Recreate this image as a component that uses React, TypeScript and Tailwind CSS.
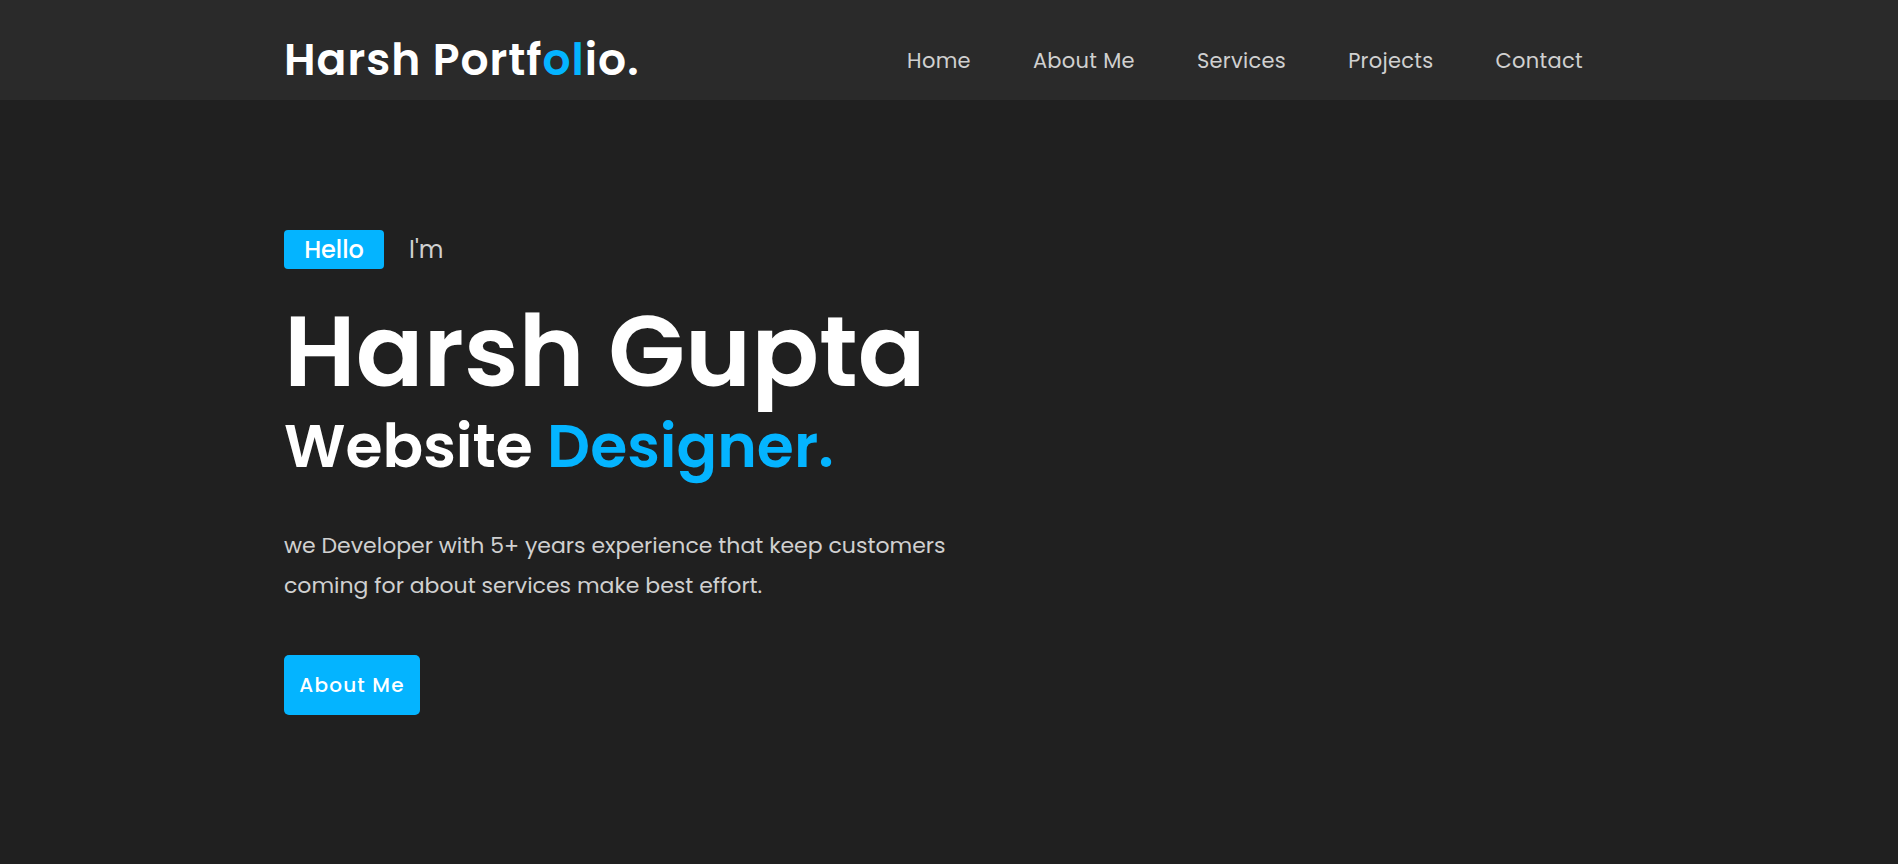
import React from 'react';

const links = ['Home', 'About Me', 'Services', 'Projects', 'Contact'];

export default function App() {
  return (
    <div className="min-h-screen bg-[#202020] font-['Poppins','Inter',sans-serif]">
      <header className="h-[100px] bg-[#2a2a2a] pt-[20px]">
        <div className="mx-auto flex h-full w-[1330px] items-center justify-between">
          <a href="#" className="text-[44px] font-semibold leading-none tracking-[1px] text-white">
            Harsh Portf<span className="text-[#04b4ff]">ol</span>io.
          </a>
          <nav className="mr-[31px] flex items-center gap-[62px]">
            {links.map((l) => (
              <a key={l} href="#" className="text-[21px] leading-none tracking-[0.3px] text-[#d0d0d0]">
                {l}
              </a>
            ))}
          </nav>
        </div>
      </header>

      <section className="mx-auto w-[1330px] pt-[130px]">
        <div className="flex items-center">
          <span className="flex h-[39px] w-[100px] items-center justify-center rounded-[4px] bg-[#04b4ff] text-[24px] font-medium leading-none text-white">
            Hello
          </span>
          <span className="ml-[25px] text-[24px] leading-none text-[#d0d0d0]">I'm</span>
        </div>
        <h1 className="mt-[32px] text-[100px] font-semibold leading-none text-white">Harsh Gupta</h1>
        <h2 className="mt-[15px] text-[60px] font-semibold leading-none text-white">
          Website <span className="text-[#04b4ff]">Designer.</span>
        </h2>
        <p className="mt-[50px] max-w-[680px] text-[22px] leading-[40px] text-[#d0d0d0]">
          we Developer with 5+ years experience that keep customers coming for about services make best effort.
        </p>
        <button className="mt-[49px] h-[60px] w-[136px] rounded-[5px] bg-[#04b4ff] text-[20px] font-medium tracking-[1.2px] text-white">
          About Me
        </button>
      </section>
    </div>
  );
}
